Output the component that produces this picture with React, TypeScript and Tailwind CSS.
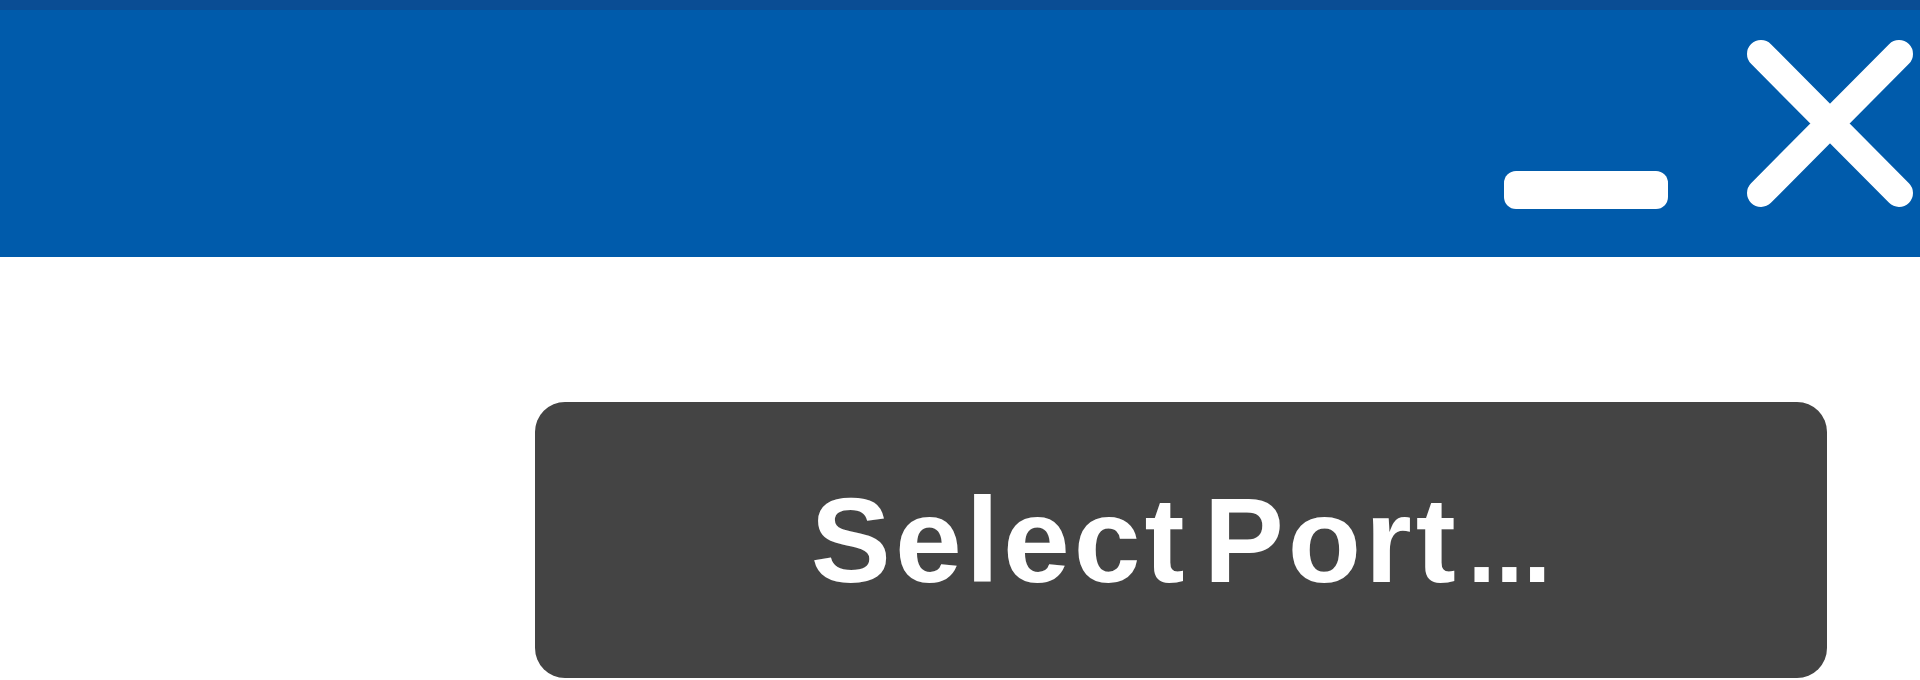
export default function App() {
  return (
    <div className="flex h-[680px] w-[1920px] flex-col overflow-hidden bg-white">
      <header className="flex h-[257px] shrink-0 flex-col bg-[#005bab]">
        <div className="h-[10px] bg-[#0a4d94]" />
        <div className="flex flex-1 items-start justify-end gap-[77px] pr-[7px]">
          <button type="button" aria-label="Minimize" className="mt-[158px]">
            <svg width="168" height="44" viewBox="0 0 168 44">
              <rect x="2" y="3" width="164" height="38" rx="12" fill="#fff" />
            </svg>
          </button>
          <button type="button" aria-label="Close" className="mt-[30px]">
            <svg width="166" height="167" viewBox="0 0 166 167">
              <path
                d="M14 14 L152 153 M152 14 L14 153"
                stroke="#fff"
                strokeWidth="28"
                strokeLinecap="round"
                fill="none"
              />
            </svg>
          </button>
        </div>
      </header>

      <div className="pl-[535px] pt-[145px]">
        <button
          type="button"
          className="flex h-[276px] w-[1292px] items-center justify-center rounded-[30px] bg-[#444444] font-['Liberation_Sans',Arial,sans-serif] font-bold leading-none text-white"
        >
          <span className="flex items-baseline">
            <span className="text-[120px] tracking-[4px] [word-spacing:-22px]">Select Port</span>
            <span className="ml-[8px] text-[100px]">...</span>
          </span>
        </button>
      </div>
    </div>
  );
}
